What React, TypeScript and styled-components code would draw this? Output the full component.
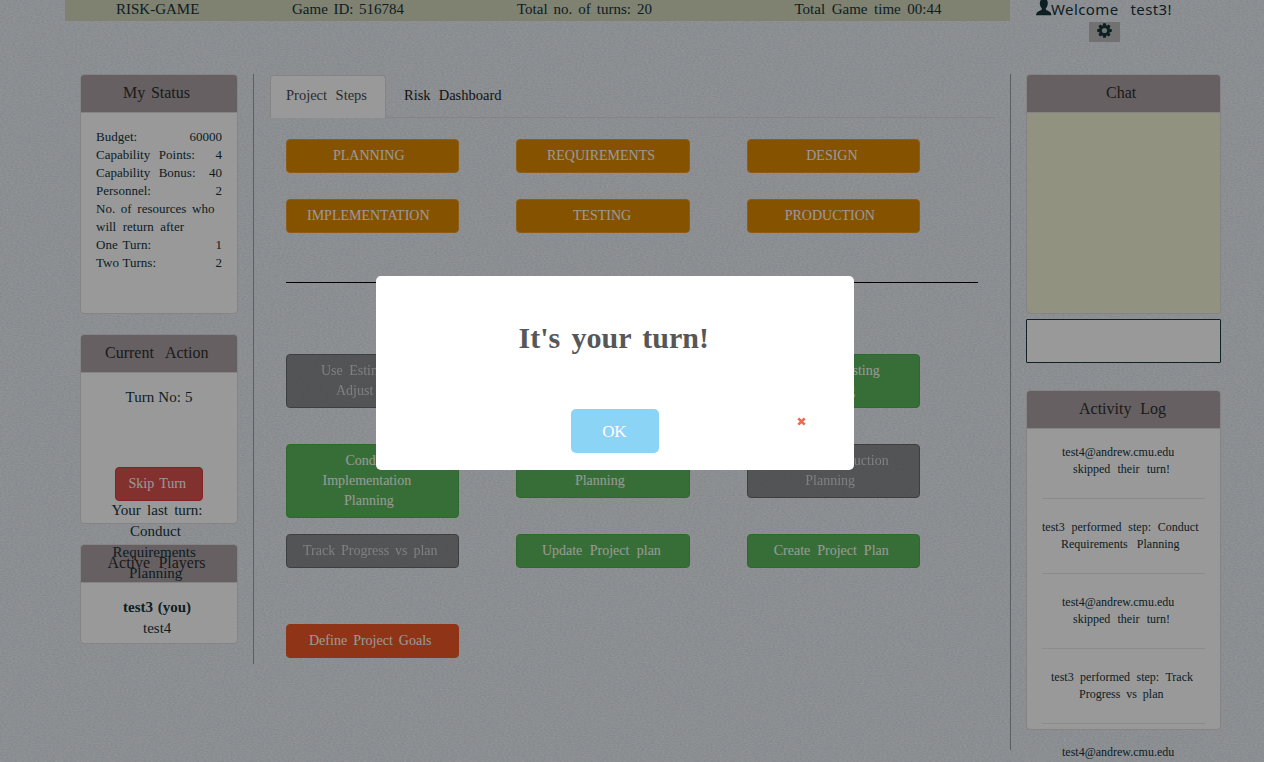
import React from "react";
import styled, { createGlobalStyle } from "styled-components";

const GlobalStyle = createGlobalStyle`
  * { box-sizing: border-box; }
  html, body { margin: 0; padding: 0; }
  body {
    background: #f1f5fb;
    color: #14343a;
    font-family: "Liberation Serif", "Times New Roman", serif;
    font-size: 15px;
    overflow: hidden;
  }
`;

const Page = styled.div`
  position: relative;
  width: 1264px;
  height: 762px;
  overflow: hidden;
`;

const Fabric = styled.svg`
  position: absolute;
  inset: 0;
`;

const Content = styled.div`
  position: relative;
  padding-left: 65px;
`;

/* A single line of text whose words are spread over a known width. */
const Line = styled.div<{ $w: number; $x?: number; $bold?: boolean }>`
  width: ${(p) => p.$w}px;
  margin-left: ${(p) => p.$x ?? 0}px;
  font-weight: ${(p) => (p.$bold ? "bold" : "inherit")};
  white-space: nowrap;
  text-align: justify;
  text-align-last: justify;
`;

const TopRow = styled.header`
  display: flex;
  height: 74px;
`;

const InfoBar = styled.div`
  display: flex;
  flex: none;
  width: 945.4px;
  height: 21px;
  background: #d4d7bc;
  line-height: 18px;
`;

const InfoCell = styled.div<{ $w: number }>`
  width: ${(p) => p.$w}px;
  flex: none;
`;

const UserBox = styled.div`
  width: 200px;
  display: flex;
  flex-direction: column;
`;

const Welcome = styled.div`
  display: flex;
  height: 22px;
  padding-left: 25.6px;
  font-family: "Noto Sans", sans-serif;
  font-size: 15px;
  line-height: 19px;
  letter-spacing: 0.4px;
`;

const GearButton = styled.div`
  display: flex;
  align-items: flex-start;
  justify-content: center;
  width: 31px;
  height: 20px;
  margin-left: 78.6px;
  padding-top: 1px;
  background: #bdbdbd;
`;

const Columns = styled.main`
  display: flex;
  align-items: flex-start;
`;

const Side = styled.aside`
  width: 189px;
  height: 590px;
  padding-left: 15px;
  border-right: 1px solid #999fa2;
  display: flex;
  flex-direction: column;
  gap: 20px;
`;

const Panel = styled.section<{ $h: number; $w: number; $fill?: string }>`
  flex: none;
  display: flex;
  flex-direction: column;
  width: ${(p) => p.$w}px;
  height: ${(p) => p.$h}px;
  background: ${(p) => p.$fill ?? "#fff"};
  border: 1px solid #dcdcdc;
  border-radius: 4px;
`;

const PanelHead = styled.h3`
  flex: none;
  margin: 0;
  height: 38px;
  padding-top: 8px;
  background: #aaa0a3;
  border-bottom: 1px solid #dcdcdc;
  border-radius: 3px 3px 0 0;
  color: #2e2e2e;
  font-weight: normal;
  font-size: 16px;
  line-height: 20px;
`;

const StatusList = styled.div`
  padding: 15px 15px 0;
  font-size: 13px;
  line-height: 18px;
`;

const StatusRow = styled.div`
  display: flex;
  justify-content: space-between;
`;

/* The last-turn text runs past the panel, over the one below it. */
const ActionBody = styled.div`
  position: relative;
  z-index: 1;
  padding-top: 14px;
  line-height: 21px;
`;

const SkipButton = styled.button`
  display: block;
  width: 88px;
  height: 34px;
  margin: 59px 0 -1px 34px;
  padding: 0 0 0 12.5px;
  border: 1px solid #d43f3a;
  border-radius: 4px;
  background: #d9534f;
  color: #fff;
  font: 14px/20px "Liberation Serif", serif;
`;

const PlayersBody = styled.div`
  padding-top: 14px;
  line-height: 21px;
`;

const Center = styled.div`
  width: 757px;
  height: 676px;
  padding: 1px 15px 0 16px;
  border-right: 1px solid #999fa2;
`;

const Tabs = styled.nav`
  display: flex;
  height: 43px;
  border-bottom: 1px solid #dcdcdc;
  line-height: 20px;
`;

const Tab = styled.div<{ $active?: boolean; $w: number }>`
  width: ${(p) => p.$w}px;
  height: 43px;
  padding-top: 9px;
  font-size: 14.5px;
  border: 1px solid ${(p) => (p.$active ? "#dcdcdc" : "transparent")};
  border-bottom: 0;
  border-radius: 4px 4px 0 0;
  background: ${(p) => (p.$active ? "#fff" : "transparent")};
  color: ${(p) => (p.$active ? "#484b4e" : "#1d1d22")};
`;

const Steps = styled.div`
  padding: 21px 0 0 16px;
  width: 708px;
`;

const Grid = styled.div<{ $row: number }>`
  display: grid;
  grid-template-columns: repeat(3, 173.2px);
  column-gap: 57.2px;
  grid-auto-rows: ${(p) => p.$row}px;
  align-items: start;
`;

const Rule = styled.hr`
  margin: 23px 0 71px;
  border: 0;
  border-top: 1px solid #000;
`;

type Tone = "phase" | "open" | "off" | "goal";
const tones: Record<Tone, [string, string]> = {
  phase: ["#de8900", "#ec9a26"],
  open: ["#5cb85c", "#4cae4c"],
  off: ["#595959", "#232323"],
  goal: ["#ee5725", "#ee5725"],
};

const Button = styled.button<{ $tone: Tone }>`
  display: block;
  width: 100%;
  margin: 0;
  padding: 6px 0;
  text-align: left;
  border: 1px solid ${(p) => tones[p.$tone][1]};
  border-radius: 4px;
  background: ${(p) => tones[p.$tone][0]};
  color: ${(p) => (p.$tone === "off" ? "#c8c8c8" : "#fff")};
  opacity: ${(p) => (p.$tone === "off" ? 0.65 : 1)};
  font: 14px/20px "Liberation Serif", serif;
`;

const Right = styled.aside`
  padding-left: 15px;
`;

const ChatInput = styled.input`
  display: block;
  width: 195px;
  height: 44px;
  margin: 5px 0 27px;
  border: 1px solid #193a40;
  border-radius: 1px;
  background: #fff;
`;

const Log = styled.div`
  padding: 15px 15px 0;
  font-size: 12px;
  line-height: 17px;
`;

const LogEntry = styled.div`
  height: 55px;
  margin-bottom: 20px;
  border-bottom: 1px solid #eaeaea;
`;

const Overlay = styled.div`
  position: absolute;
  inset: 0;
  z-index: 2;
  background: rgba(0, 0, 0, 0.4);
`;

const Modal = styled.div`
  position: absolute;
  left: 376px;
  top: 276px;
  width: 478px;
  height: 194px;
  padding-top: 42px;
  border-radius: 5px;
  background: #fff;
`;

const ModalTitle = styled.h2`
  margin: 0;
  color: #575757;
  font-size: 30px;
  line-height: 40px;
`;

const ModalActions = styled.div`
  display: flex;
  margin-top: 51px;
  padding-left: 195px;
`;

const OkButton = styled.button`
  width: 88.4px;
  height: 44px;
  padding: 1px 2px 0 0;
  border: 0;
  border-radius: 5px;
  background: #8cd4f5;
  color: #fff;
  font: 17px/20px "Liberation Serif", serif;
  letter-spacing: -0.4px;
`;

const Cross = styled.svg`
  margin: 8px 0 0 137.5px;
`;

const LOG: [number, number, string][][] = [
  [[20, 112, "test4@andrew.cmu.edu"], [31, 97, "skipped their turn!"]],
  [[0, 156.5, "test3 performed step: Conduct"], [19, 118.5, "Requirements Planning"]],
  [[20, 112, "test4@andrew.cmu.edu"], [31, 97, "skipped their turn!"]],
  [[9, 142, "test3 performed step: Track"], [37, 84.5, "Progress vs plan"]],
  [[20, 112, "test4@andrew.cmu.edu"]],
];

const STATUS: [string, number, string][] = [
  ["Budget:", 41, "60000"],
  ["Capability Points:", 99, "4"],
  ["Capability Bonus:", 99.5, "40"],
  ["Personnel:", 55, "2"],
  ["No. of resources who", 118.5, ""],
  ["will return after", 88, ""],
  ["One Turn:", 55, "1"],
  ["Two Turns:", 60, "2"],
];

/* Each line of a button: left inset, width, text. */
type Label = [number, number, string];
type Step = { tone: Tone; lines: Label[] };

const PHASES: Step[] = [
  { tone: "phase", lines: [[46, 72, "PLANNING"]] },
  { tone: "phase", lines: [[29.5, 109, "REQUIREMENTS"]] },
  { tone: "phase", lines: [[58.5, 51, "DESIGN"]] },
  { tone: "phase", lines: [[20, 123, "IMPLEMENTATION"]] },
  { tone: "phase", lines: [[55.5, 58, "TESTING"]] },
  { tone: "phase", lines: [[37, 91, "PRODUCTION"]] },
];

const ACTIONS: Step[] = [
  { tone: "off", lines: [[34, 100, "Use Estimates to"], [49, 70, "Adjust Plan"]] },
  { tone: "open", lines: [[34, 100, "Conduct Design"], [57, 50, "Planning"]] },
  { tone: "open", lines: [[30, 102, "Conduct Testing"], [57.5, 50.5, "Planning"]] },
  { tone: "open", lines: [[58.5, 47, "Conduct"], [35.5, 88.5, "Implementation"], [57, 50, "Planning"]] },
  { tone: "open", lines: [[22, 122, "Conduct Requirements"], [57.5, 50, "Planning"]] },
  { tone: "off", lines: [[23, 118, "Conduct Production"], [57.5, 50, "Planning"]] },
  { tone: "off", lines: [[16, 134.5, "Track Progress vs plan"]] },
  { tone: "open", lines: [[24.5, 119, "Update Project plan"]] },
  { tone: "open", lines: [[26, 115, "Create Project Plan"]] },
  { tone: "goal", lines: [[22, 122.5, "Define Project Goals"]] },
];

const StepButton = ({ step }: { step: Step }) => (
  <Button $tone={step.tone}>
    {step.lines.map(([x, w, text]) => (
      <Line key={text} $x={x} $w={w}>{text}</Line>
    ))}
  </Button>
);

const UserIcon = () => (
  <svg width="16" height="16" viewBox="0 0 16 16" fill="#14343a">
    <path d="M7.8 -1C4.9 -1 3.7 .8 3.8 3.4C3.9 5.6 4.7 7.2 5.8 8.2V9.6C5.3 10.7 1.2 11.3 .5 13.2C.2 13.9 .1 14.5 .1 15.2H15.4C15.4 14.5 15.3 13.9 15 13.2C14.3 11.3 10.3 10.7 9.8 9.6V8.2C10.9 7.2 11.7 5.6 11.8 3.4C11.9 .8 10.7 -1 7.8 -1Z" />
  </svg>
);

const GearIcon = () => (
  <svg width="15" height="15" viewBox="-7.5 -7.5 15 15" fill="#14343a">
    {[0, 45, 90, 135].map((a) => (
      <path key={a} transform={`rotate(${a})`} d="M-1.9 -4.6L-1.3 -7.3H1.3L1.9 -4.6V4.6L1.3 7.3H-1.3L-1.9 4.6Z" />
    ))}
    <circle r="5.3" />
    <circle r="2.6" fill="#bdbdbd" />
  </svg>
);

export default function App() {
  return (
    <Page>
      <GlobalStyle />
      <Fabric width="1264" height="762" aria-hidden="true">
        <filter id="weave" x="0" y="0" width="100%" height="100%" colorInterpolationFilters="sRGB">
          <feTurbulence type="fractalNoise" baseFrequency="0.45 0.85" numOctaves={1} seed={4} />
          <feColorMatrix values="0 0 0 0 0.22  0 0 0 0 0.27  0 0 0 0 0.28  0.2 0 0 0 -0.055" />
        </filter>
        <rect width="1264" height="762" filter="url(#weave)" />
      </Fabric>
      <Content>
        <TopRow>
          <InfoBar>
            <InfoCell $w={185}><Line $x={51} $w={84}>RISK-GAME</Line></InfoCell>
            <InfoCell $w={196}><Line $x={42} $w={112}>Game ID: 516784</Line></InfoCell>
            <InfoCell $w={277}><Line $x={71} $w={135}>Total no. of turns: 20</Line></InfoCell>
            <InfoCell $w={287}><Line $x={71.5} $w={147}>Total Game time 00:44</Line></InfoCell>
          </InfoBar>
          <UserBox>
            <Welcome><UserIcon /><Line $x={-1} $w={121}>Welcome test3!</Line></Welcome>
            <GearButton><GearIcon /></GearButton>
          </UserBox>
        </TopRow>
        <Columns>
          <Side>
            <Panel $w={158} $h={240}>
              <PanelHead><Line $x={42} $w={67}>My Status</Line></PanelHead>
              <StatusList>
                {STATUS.map(([label, w, value]) => (
                  <StatusRow key={label}><Line $w={w}>{label}</Line><span>{value}</span></StatusRow>
                ))}
              </StatusList>
            </Panel>
            <Panel $w={158} $h={190}>
              <PanelHead><Line $x={24} $w={103.5}>Current Action</Line></PanelHead>
              <ActionBody>
                <Line $x={44.5} $w={67}>Turn No: 5</Line>
                <SkipButton><Line $w={57.5}>Skip Turn</Line></SkipButton>
                <Line $x={30.5} $w={91}>Your last turn:</Line>
                <Line $x={49} $w={51}>Conduct</Line>
                <Line $x={31.5} $w={84}>Requirements</Line>
                <Line $x={48} $w={54}>Planning</Line>
              </ActionBody>
            </Panel>
            <Panel $w={158} $h={100}>
              <PanelHead><Line $x={26.5} $w={98}>Active Players</Line></PanelHead>
              <PlayersBody>
                <Line $bold $x={42} $w={68}>test3 (you)</Line>
                <Line $x={62} $w={29}>test4</Line>
              </PlayersBody>
            </Panel>
          </Side>
          <Center>
            <Tabs>
              <Tab $active $w={116}><Line $x={15} $w={81}>Project Steps</Line></Tab>
              <Tab $w={140}><Line $x={17} $w={97.5}>Risk Dashboard</Line></Tab>
            </Tabs>
            <Steps>
              <Grid $row={60}>
                {PHASES.map((s, i) => <StepButton key={i} step={s} />)}
              </Grid>
              <Rule />
              <Grid $row={90}>
                {ACTIONS.map((s, i) => <StepButton key={i} step={s} />)}
              </Grid>
            </Steps>
          </Center>
          <Right>
            <Panel $w={195} $h={240} $fill="#f2f5d5">
              <PanelHead><Line $x={79} $w={31}>Chat</Line></PanelHead>
            </Panel>
            <ChatInput />
            <Panel $w={195} $h={340}>
              <PanelHead><Line $x={52} $w={87}>Activity Log</Line></PanelHead>
              <Log>
                {LOG.map((lines, i) => (
                  <LogEntry key={i}>
                    {lines.map(([x, w, text]) => <Line key={text} $x={x} $w={w}>{text}</Line>)}
                  </LogEntry>
                ))}
              </Log>
            </Panel>
          </Right>
        </Columns>
      </Content>
      <Overlay>
        <Modal>
          <ModalTitle><Line $x={142.5} $w={190.5}>It's your turn!</Line></ModalTitle>
          <ModalActions>
            <OkButton>OK</OkButton>
            <Cross width="9" height="9" viewBox="0 0 9 9">
              <path d="M1.3 1.3L7.7 7.7M7.7 1.3L1.3 7.7" stroke="#f0694f" strokeWidth="2.6" />
            </Cross>
          </ModalActions>
        </Modal>
      </Overlay>
    </Page>
  );
}
